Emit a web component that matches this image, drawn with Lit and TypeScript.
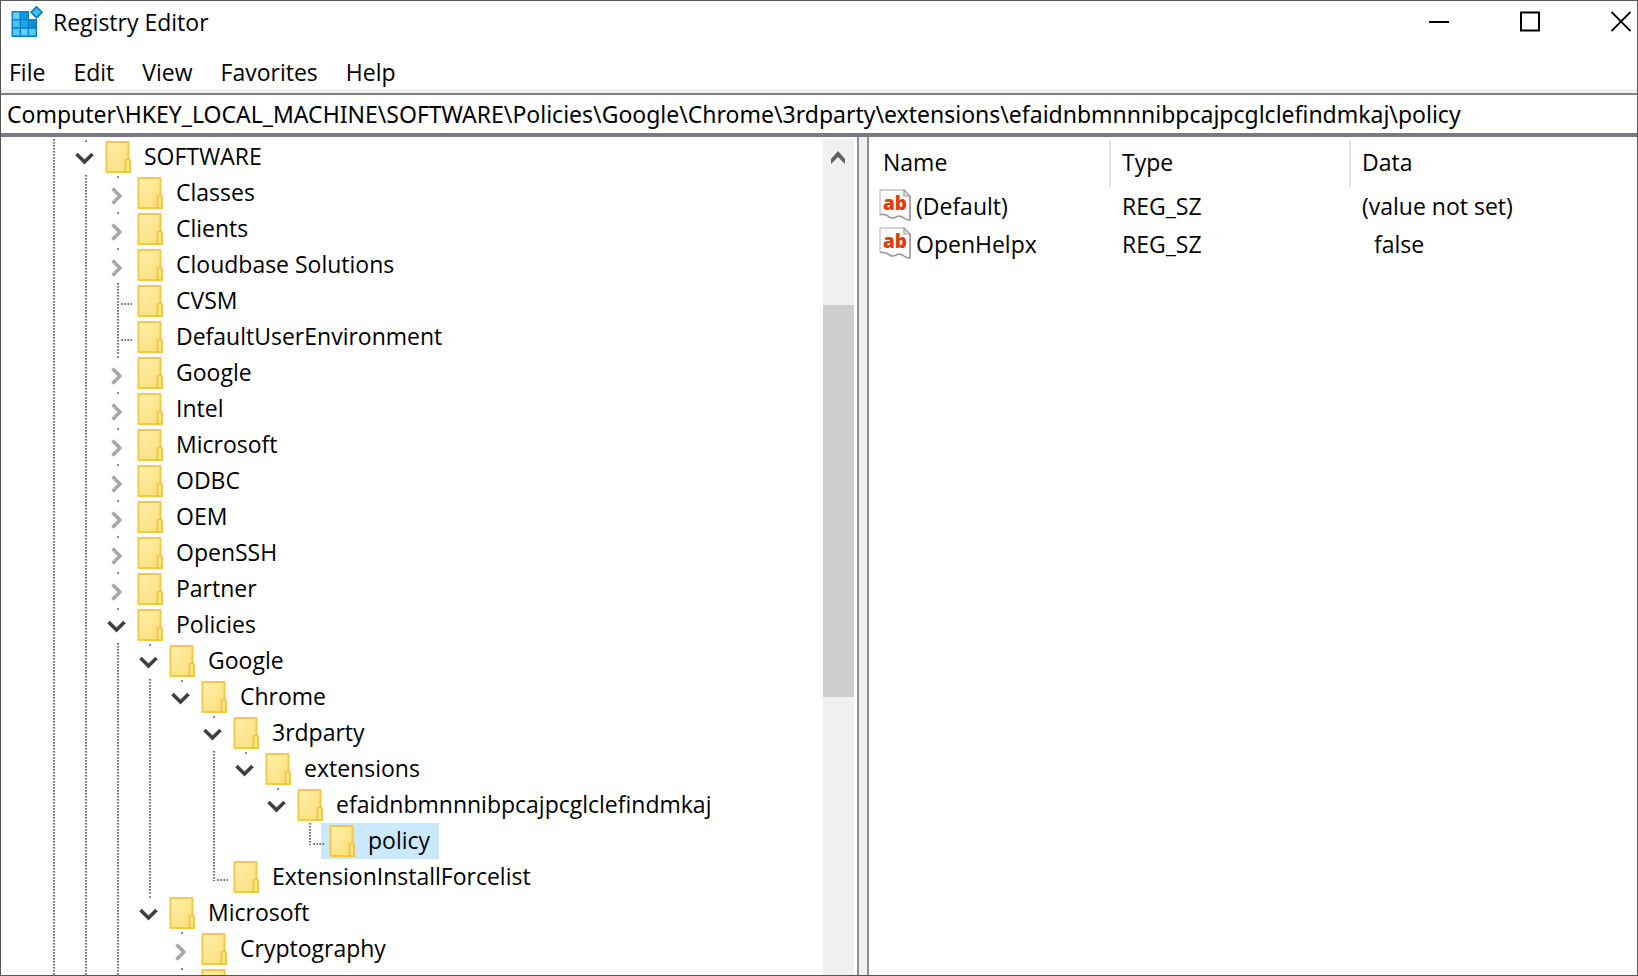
import { LitElement, html, svg, css } from "lit";
import { customElement, property } from "lit/decorators.js";
import { classMap } from "lit/directives/class-map.js";

type Guide = "line" | "blank";
type Knob = "open" | "closed" | "leaf" | "last";

interface Key {
  name: string;
  guides: Guide[];
  knob: Knob;
  selected?: boolean;
}

interface Value {
  name: string;
  type: string;
  data: string;
}

const L: Guide = "line";
const B: Guide = "blank";

const KEYS: Key[] = [
  { name: "SOFTWARE", guides: [L], knob: "open" },
  { name: "Classes", guides: [L, L], knob: "closed" },
  { name: "Clients", guides: [L, L], knob: "closed" },
  { name: "Cloudbase Solutions", guides: [L, L], knob: "closed" },
  { name: "CVSM", guides: [L, L], knob: "leaf" },
  { name: "DefaultUserEnvironment", guides: [L, L], knob: "leaf" },
  { name: "Google", guides: [L, L], knob: "closed" },
  { name: "Intel", guides: [L, L], knob: "closed" },
  { name: "Microsoft", guides: [L, L], knob: "closed" },
  { name: "ODBC", guides: [L, L], knob: "closed" },
  { name: "OEM", guides: [L, L], knob: "closed" },
  { name: "OpenSSH", guides: [L, L], knob: "closed" },
  { name: "Partner", guides: [L, L], knob: "closed" },
  { name: "Policies", guides: [L, L], knob: "open" },
  { name: "Google", guides: [L, L, L], knob: "open" },
  { name: "Chrome", guides: [L, L, L, L], knob: "open" },
  { name: "3rdparty", guides: [L, L, L, L, B], knob: "open" },
  { name: "extensions", guides: [L, L, L, L, B, L], knob: "open" },
  { name: "efaidnbmnnnibpcajpcglclefindmkaj", guides: [L, L, L, L, B, L, B], knob: "open" },
  { name: "policy", guides: [L, L, L, L, B, L, B, B], knob: "last", selected: true },
  { name: "ExtensionInstallForcelist", guides: [L, L, L, L, B], knob: "last" },
  { name: "Microsoft", guides: [L, L, L], knob: "open" },
  { name: "Cryptography", guides: [L, L, L, B], knob: "closed" },
  { name: "Internet Explorer", guides: [L, L, L, B], knob: "closed" },
];

const VALUES: Value[] = [
  { name: "(Default)", type: "REG_SZ", data: "(value not set)" },
  { name: "OpenHelpx", type: "REG_SZ", data: "  false" },
];

const PATH =
  "Computer\\HKEY_LOCAL_MACHINE\\SOFTWARE\\Policies\\Google\\Chrome\\3rdparty\\extensions\\efaidnbmnnnibpcajpcglclefindmkaj\\policy";

const folderIcon = html`<svg class="folder" width="26" height="32" viewBox="0 0 26 32" aria-hidden="true">
  <defs>
    <linearGradient id="f" x1="0" y1="0" x2="1" y2="1">
      <stop offset="0" stop-color="#fff0ac" />
      <stop offset="1" stop-color="#fbdc76" />
    </linearGradient>
  </defs>
  <path d="M1.500 1H23.500V18L25 20V31H1.500Z" fill="url(#f)" stroke="#f3c845" stroke-width="2" stroke-linejoin="round" />
  <path d="M20.500 31V21Q20.500 18 22.800 18Q25 18 25 21V31Z" fill="#fde38a" stroke="#efc038" stroke-width="1.500" />
</svg>`;

const appCell = (x: number, y: number, color: string) =>
  svg`<rect x=${x} y=${y} width="6.600" height="6.600" fill=${color} />`;

const appIcon = html`<svg width="32" height="32" viewBox="0 0 32 32" aria-hidden="true">
  <path d="M0.500 5H18V13H26V31H0.500Z" fill="#0a7fc8" />
  ${appCell(2, 6.5, "#5fd0f8")}${appCell(10, 6.5, "#0c9be0")}
  ${appCell(2, 14.5, "#45c4f4")}${appCell(10, 14.5, "#1ba9e6")}${appCell(18, 14.5, "#0b8fd6")}
  ${appCell(2, 22.8, "#55ccf7")}${appCell(10, 22.8, "#62d2f9")}${appCell(18, 22.8, "#55ccf7")}
  <path d="M25.500 0.800L31 6.300L25.500 11.800L20 6.300Z" fill="#3db9ee" stroke="#0b78be" stroke-width="1.600" />
</svg>`;

const stringIcon = html`<svg class="string" width="32" height="32" viewBox="0 0 32 32" aria-hidden="true">
  <path
    d="M1 1H25L31 7V31Q27 31 24 28.500Q20 26 16 28.500Q12 30 9 27Q6 25 1 25.500Z"
    fill="#fdfdfd"
    stroke="#c4c4c4"
    stroke-width="1.300"
  />
  <path d="M31 7V31Q27 31 24 28.500Q20 26 16 28.500Q12 30 9 27Q6 25 1 25.500" fill="none" stroke="#9c9c9c" stroke-width="1.600" />
  <path d="M25 1V7H31Z" fill="#e8e8e8" stroke="#a0a0a0" stroke-width="1.200" />
  <text x="4" y="21" font-family="Open Sans, sans-serif" font-size="19" font-weight="800" fill="#dd3c14">ab</text>
</svg>`;

@customElement("registry-tree")
class RegistryTree extends LitElement {
  @property({ attribute: false }) keys: Key[] = [];

  static styles = css`
    :host {
      display: flex;
      min-height: 0;
      overflow: hidden;
      padding: 2px 3px 0 37px;
      border-right: 2px solid #8b909c;
      background: #fff;
    }
    .rows {
      flex: 1;
      min-width: 0;
      margin: 0;
      padding: 0;
      list-style: none;
    }
    .row {
      display: flex;
      height: 36px;
    }
    .cell {
      flex: none;
      position: relative;
      width: 32px;
      height: 36px;
    }
    .line,
    .leaf,
    .last {
      background: repeating-linear-gradient(#757575 0 1px, #a8a8a8 1px 2px, #fff 2px 3px) 15px 0 / 2px 100% no-repeat;
    }
    .last {
      background-size: 2px 22px;
    }
    .leaf::after,
    .last::after {
      content: "";
      position: absolute;
      z-index: 1;
      left: 18px;
      top: 20px;
      width: 12px;
      height: 2px;
      background: repeating-linear-gradient(90deg, transparent 0 1px, #a8a8a8 1px 2px, #757575 2px 3px);
    }
    .knob {
      padding: 0;
      border: 0;
      background: linear-gradient(#8a8a8a, #8a8a8a) 15px 1px / 2px 2px no-repeat;
      display: block;
    }
    .knob svg {
      display: block;
    }
    .item {
      display: flex;
      height: 36px;
      margin-left: -5px;
      padding: 0 9px 0 8px;
      line-height: 34px;
      white-space: nowrap;
      color: #000;
      text-decoration: none;
    }
    .selected {
      background: #cce8ff;
    }
    .folder {
      margin: 2px 13px 0 0;
    }
    .bar {
      flex: none;
      width: 31px;
      display: flex;
      flex-direction: column;
      background: #f0f0f0;
    }
    .up {
      height: 36px;
      padding: 0;
      border: 0;
      background: none;
    }
    .up svg {
      display: block;
    }
    .before {
      flex: 130;
    }
    .thumb {
      flex: 392;
      background: #cdcdcd;
    }
    .after {
      flex: 278;
    }
  `;

  private knob(key: Key) {
    if (key.knob === "leaf" || key.knob === "last") {
      return html`<span class="cell ${key.knob}"></span>`;
    }
    const open = key.knob === "open";
    return html`<button class="cell knob" aria-label="${open ? "Collapse" : "Expand"} ${key.name}">
      <svg width="32" height="36" viewBox="0 0 32 36">
        ${open
          ? svg`<path d="M6.500 15L14.500 23L22.500 15" fill="none" stroke="#404040" stroke-width="3.600" />`
          : svg`<path d="M10.500 13.500L18 21L10.500 28.500" fill="none" stroke="#a6a6a6" stroke-width="3.400" />`}
      </svg>
    </button>`;
  }

  render() {
    return html`
      <ul class="rows">
        ${this.keys.map(
          (key) => html`<li class="row">
            ${key.guides.map((g) => html`<span class="cell ${g}"></span>`)}${this.knob(key)}
            <a class=${classMap({ item: true, selected: !!key.selected })} href="#">${folderIcon}${key.name}</a>
          </li>`
        )}
      </ul>
      <div class="bar">
        <button class="up" aria-label="Scroll up">
          <svg width="31" height="36" viewBox="0 0 31 36">
            <path d="M8 25V20L15 12L22 20V25L15 18Z" fill="#606060" />
          </svg>
        </button>
        <div class="before"></div>
        <div class="thumb"></div>
        <div class="after"></div>
      </div>
    `;
  }
}

@customElement("registry-values")
class RegistryValues extends LitElement {
  @property({ attribute: false }) values: Value[] = [];

  static styles = css`
    :host {
      display: block;
      min-width: 0;
      overflow: hidden;
      padding-top: 3px;
      border-left: 2px solid #8b909c;
      background: #fff;
    }
    .list {
      width: 100%;
      table-layout: fixed;
      border-collapse: separate;
      border-spacing: 0;
    }
    .name,
    .type {
      box-sizing: border-box;
      width: 240px;
    }
    .head {
      box-sizing: border-box;
      height: 47px;
      padding: 0 0 3px 11px;
      border-left: 2px solid #e5e5e5;
      line-height: 44px;
      font-weight: 400;
      text-align: left;
    }
    .head.name {
      padding-left: 14px;
      border-left: 0;
    }
    .cell {
      height: 38px;
      padding: 0 0 0 13px;
      line-height: 38px;
      white-space: pre;
    }
    .label {
      display: flex;
      gap: 5px;
      margin-left: -3px;
    }
    .string {
      margin-top: 2px;
    }
  `;

  render() {
    return html`<table class="list">
      <thead>
        <tr>
          <th class="head name">Name</th>
          <th class="head type">Type</th>
          <th class="head">Data</th>
        </tr>
      </thead>
      <tbody>
        ${this.values.map(
          (v) => html`<tr>
            <td class="cell"><div class="label">${stringIcon}<span>${v.name}</span></div></td>
            <td class="cell">${v.type}</td>
            <td class="cell">${v.data}</td>
          </tr>`
        )}
      </tbody>
    </table>`;
  }
}

@customElement("app-root")
class AppRoot extends LitElement {
  static styles = css`
    :host {
      box-sizing: border-box;
      display: grid;
      grid-template-rows: auto auto auto minmax(0, 1fr);
      height: 100vh;
      overflow: hidden;
      border: 1px solid #555;
      background: #fff;
      color: #000;
      font: 23px "Open Sans", "Noto Sans", sans-serif;
    }
    .title {
      display: flex;
      align-items: center;
      height: 42px;
      padding: 0 6px 0 10px;
    }
    .caption {
      flex: 1;
      margin: 0 0 0 10px;
      font-size: 23px;
      font-weight: 400;
    }
    .controls {
      display: flex;
      gap: 71px;
    }
    .control {
      padding: 0;
      border: 0;
      background: none;
    }
    .control svg {
      display: block;
    }
    .menu {
      display: flex;
      gap: 28px;
      padding: 12px 8px 0;
      border-bottom: 4px solid #f0f0f0;
    }
    .entry {
      padding: 0;
      border: 0;
      background: none;
      color: inherit;
      font: inherit;
      line-height: 34px;
    }
    .address {
      display: block;
      box-sizing: border-box;
      width: 100%;
      height: 44px;
      margin: 0;
      padding: 0 6px;
      border: solid #808080;
      border-width: 2px 0 4px;
      border-bottom-color: #777983;
      border-radius: 0;
      outline: 0;
      background: #fff;
      color: #000;
      font: 23px "Noto Sans", "Open Sans", sans-serif;
    }
    .panes {
      display: grid;
      grid-template-columns: 858fr 8px 770fr;
      grid-template-rows: minmax(0, 1fr);
      background: #f0f0f0;
    }
  `;

  render() {
    return html`
      <header class="title">
        ${appIcon}
        <h1 class="caption">Registry Editor</h1>
        <div class="controls">
          <button class="control" aria-label="Minimize">
            <svg width="20" height="22" viewBox="0 0 20 22"><path d="M0 11H20" stroke="#000" stroke-width="2" /></svg>
          </button>
          <button class="control" aria-label="Maximize">
            <svg width="20" height="22" viewBox="0 0 20 22">
              <rect x="1" y="1.500" width="18" height="18" fill="none" stroke="#000" stroke-width="2" />
            </svg>
          </button>
          <button class="control" aria-label="Close">
            <svg width="20" height="22" viewBox="0 0 20 22">
              <path d="M0.500 1L19.500 20M19.500 1L0.500 20" stroke="#000" stroke-width="1.800" />
            </svg>
          </button>
        </div>
      </header>
      <nav class="menu">
        ${["File", "Edit", "View", "Favorites", "Help"].map((m) => html`<button class="entry">${m}</button>`)}
      </nav>
      <input class="address" aria-label="Key path" spellcheck="false" .value=${PATH} />
      <main class="panes">
        <registry-tree .keys=${KEYS}></registry-tree>
        <span></span>
        <registry-values .values=${VALUES}></registry-values>
      </main>
    `;
  }
}
